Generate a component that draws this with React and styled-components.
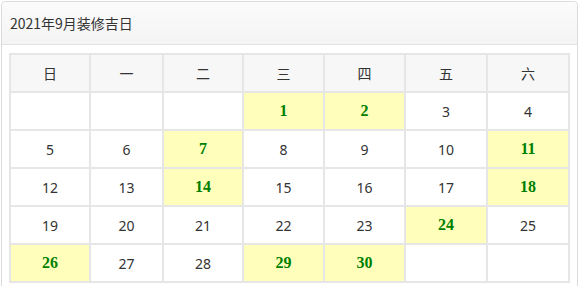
import React from "react";
import styled, { createGlobalStyle } from "styled-components";

const GlobalStyle = createGlobalStyle`
  body {
    margin: 0;
    background: #fff;
    font-family: "Noto Sans", "Noto Sans CJK SC", sans-serif;
  }
`;

const Page = styled.div`
  padding: 1px 2px 0 1px;
`;

const Panel = styled.div`
  border: 1px solid #dcdcdc;
  border-radius: 4px;
  background: #fff;
`;

const PanelHeader = styled.div`
  height: 42px;
  display: flex;
  align-items: center;
  padding: 0 8px;
  background: linear-gradient(#fbfbfb, #f4f4f4);
  border-bottom: 1px solid #e2e2e2;
  border-radius: 4px 4px 0 0;
  font-family: "Noto Sans CJK SC", sans-serif;
  font-size: 14px;
  color: #333;
`;

const PanelBody = styled.div`
  padding: 8px 8px 8px 7px;
`;

const Calendar = styled.table`
  border-collapse: collapse;
  table-layout: fixed;
  width: 559px;
`;

const HeadCell = styled.th`
  height: 36px;
  padding: 0;
  border: 2px solid #e6e6e6;
  background: #f7f7f7;
  font-weight: normal;
  font-size: 14px;
  color: #333;
  font-family: "Noto Sans CJK SC", "Noto Sans", sans-serif;
`;

const DayCell = styled.td`
  height: 36px;
  padding: 0;
  border: 2px solid #e6e6e6;
  text-align: center;
  background: ${(p) => (p.$lucky ? "#ffffbb" : "#fff")};
  color: ${(p) => (p.$lucky ? "#008000" : "#333")};
  font-family: ${(p) =>
    p.$lucky ? '"Liberation Serif", serif' : '"Noto Sans", sans-serif'};
  font-weight: ${(p) => (p.$lucky ? "bold" : "normal")};
  font-size: ${(p) => (p.$lucky ? "16px" : "14px")};
`;

const weekdays = ["日", "一", "二", "三", "四", "五", "六"];
const colWidths = [80, 73, 80, 81, 81, 82, 82];
const luckyDays = [1, 2, 7, 11, 14, 18, 24, 26, 29, 30];

// September 2021 starts on a Wednesday
const firstWeekday = 3;
const daysInMonth = 30;

function buildWeeks() {
  const cells = [];
  for (let i = 0; i < firstWeekday; i++) cells.push(null);
  for (let d = 1; d <= daysInMonth; d++) cells.push(d);
  while (cells.length % 7) cells.push(null);
  const weeks = [];
  for (let i = 0; i < cells.length; i += 7) weeks.push(cells.slice(i, i + 7));
  return weeks;
}

export default function App() {
  const weeks = buildWeeks();
  return (
    <Page>
      <GlobalStyle />
      <Panel>
        <PanelHeader>2021年9月装修吉日</PanelHeader>
        <PanelBody>
          <Calendar>
            <colgroup>
              {colWidths.map((w, i) => (
                <col key={i} style={{ width: w }} />
              ))}
            </colgroup>
            <thead>
              <tr>
                {weekdays.map((w) => (
                  <HeadCell key={w}>{w}</HeadCell>
                ))}
              </tr>
            </thead>
            <tbody>
              {weeks.map((week, wi) => (
                <tr key={wi}>
                  {week.map((d, di) => (
                    <DayCell key={di} $lucky={d && luckyDays.includes(d)}>
                      {d}
                    </DayCell>
                  ))}
                </tr>
              ))}
            </tbody>
          </Calendar>
        </PanelBody>
      </Panel>
    </Page>
  );
}
